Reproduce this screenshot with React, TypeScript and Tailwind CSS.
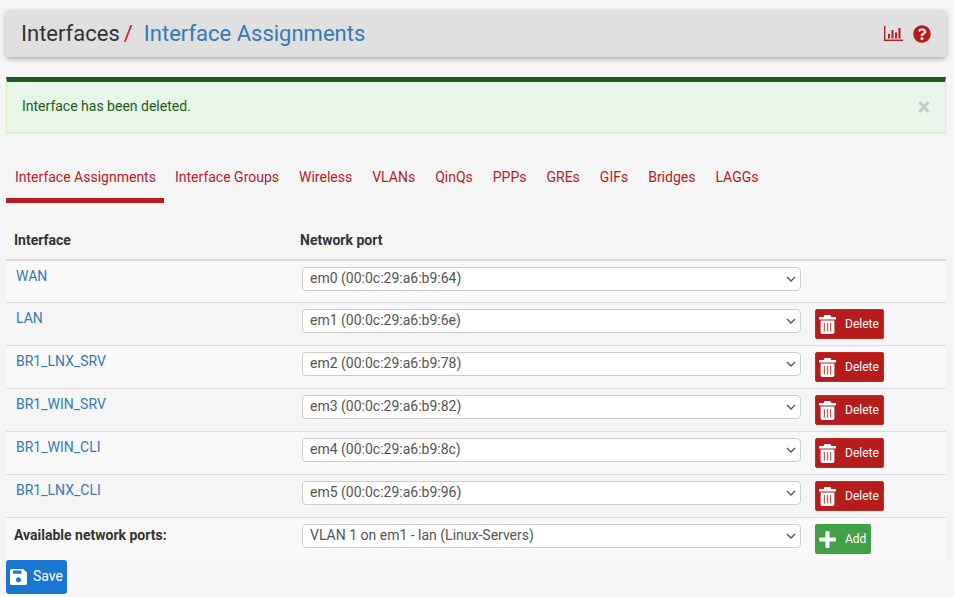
import { FaQuestionCircle } from "react-icons/fa";

const tabs = ["Interface Assignments", "Interface Groups", "Wireless", "VLANs", "QinQs", "PPPs", "GREs", "GIFs", "Bridges", "LAGGs"];
const rows = [
  ["WAN", "em0 (00:0c:29:a6:b9:64)"],
  ["LAN", "em1 (00:0c:29:a6:b9:6e)"],
  ["BR1_LNX_SRV", "em2 (00:0c:29:a6:b9:78)"],
  ["BR1_WIN_SRV", "em3 (00:0c:29:a6:b9:82)"],
  ["BR1_WIN_CLI", "em4 (00:0c:29:a6:b9:8c)"],
  ["BR1_LNX_CLI", "em5 (00:0c:29:a6:b9:96)"],
];

function ChartIcon() {
  return (
    <svg width="19" height="15" viewBox="0 0 19 15" fill="#b71c1c">
      <rect x="0" y="0" width="1.4" height="15" />
      <rect x="0" y="13.6" width="19" height="1.4" />
      <rect x="4" y="8" width="2" height="4.5" />
      <rect x="7.5" y="4" width="2" height="8.5" />
      <rect x="11" y="6.5" width="2" height="6" />
      <rect x="14.5" y="2" width="2" height="10.5" />
    </svg>
  );
}

function TrashIcon() {
  return (
    <svg width="17" height="19" viewBox="0 0 17 19" fill="#fff" className="shrink-0">
      <path d="M5.5 0h6l.8 2H17v2.4H0V2h4.700z" />
      <path d="M1.600 5.400h13.800v11.600c0 1.100-.8 2-1.800 2H3.400c-1 0-1.800-.9-1.800-2z" />
      <rect x="4.800" y="8" width="1.200" height="8.500" fill="#c9574f" />
      <rect x="7.900" y="8" width="1.200" height="8.500" fill="#c9574f" />
      <rect x="11" y="8" width="1.200" height="8.500" fill="#c9574f" />
    </svg>
  );
}

function PlusIcon() {
  return (
    <svg width="17" height="17" viewBox="0 0 17 17" fill="#fff" className="shrink-0">
      <path d="M6.500 1c0-.6.400-1 1-1h2c.6 0 1 .4 1 1v5.500H16c.6 0 1 .4 1 1v2c0 .6-.4 1-1 1h-5.500V16c0 .6-.4 1-1 1h-2c-.6 0-1-.4-1-1v-5.500H1c-.6 0-1-.4-1-1v-2c0-.6.400-1 1-1h5.500z" />
    </svg>
  );
}

function SaveIcon() {
  return (
    <svg width="17" height="16" viewBox="0 0 17 16" className="shrink-0">
      <path d="M1.500 0H13l4 3.600v10.900c0 .8-.7 1.500-1.500 1.500h-14C.7 16 0 15.300 0 14.500V1.500C0 .7.700 0 1.500 0z" fill="#fff" />
      <rect x="3" y="1.500" width="8.500" height="3.200" rx=".5" fill="#1976d2" />
      <circle cx="8.500" cy="10.800" r="2.500" fill="#1976d2" />
    </svg>
  );
}

function PortSelect({ value }: { value: string }) {
  return (
    <div className="relative w-[499px] h-[24px]">
      <select
        defaultValue={value}
        className="appearance-none block w-full h-full bg-white border border-[#cccccc] rounded-[4px] pl-[7px] pb-[1px] text-[14px] text-[#555555] font-['Roboto',sans-serif]"
      >
        <option>{value}</option>
      </select>
      <svg width="10" height="6" viewBox="0 0 10 6" className="absolute right-[5px] top-[9px] pointer-events-none">
        <path d="M1 1l4 4 4-4" fill="none" stroke="#555555" strokeWidth="1.400" />
      </svg>
    </div>
  );
}

export default function App() {
  return (
    <div className="min-h-[597px] bg-[#f5f5f5] pl-[6px] pr-[8px] pt-[10px] font-['Roboto',sans-serif] text-[14px] text-[#333333]">
      <div className="h-[47px] bg-[#e0e0e0] rounded-[4px] shadow-[0_2px_5px_rgba(0,0,0,0.3)] flex items-center justify-between pl-[15px] pr-[15px]">
        <div className="flex items-center text-[22px] leading-[26px]">
          <span>Interfaces</span>
          <span className="text-[#b71c1c] ml-[4px]">/</span>
          <span className="text-[#337ab7] ml-[11px]">Interface Assignments</span>
        </div>
        <div className="flex items-center gap-[10px]">
          <ChartIcon />
          <FaQuestionCircle className="text-[#b71c1c] w-[18px] h-[18px]" />
        </div>
      </div>

      <div className="mt-[20px] h-[56px] bg-[#e8f5e9] border border-[#dcedc8] border-t-[5px] border-t-[#1b5e20] flex items-center justify-between pl-[15px] pr-[15px] pb-[2px] text-[#1b5e20] shadow-[0_1px_1px_rgba(0,0,0,0.05)]">
        <span>Interface has been deleted.</span>
        <span className="text-[23px] font-bold leading-none text-[#c4c9c4] pt-[3px]">×</span>
      </div>

      <div className="mt-[23px] flex gap-[2px] h-[47px]">
        {tabs.map((t, i) => (
          <div
            key={t}
            className={
              i === 0
                ? "w-[158px] whitespace-nowrap h-[47px] pl-[9px] pt-[11px] leading-[20px] text-[#b71c1c] border-b-[5px] border-[#b71c1c]"
                : "h-[47px] px-[9px] pt-[11px] leading-[20px] text-[#b71c1c]"
            }
          >
            {t}
          </div>
        ))}
      </div>

      <div className="mt-[20px] flex items-center h-[38px] pb-[2px] border-b-2 border-[#dddddd] font-bold">
        <div className="w-[294px] pl-[8px]">Interface</div>
        <div>Network port</div>
      </div>

      {rows.map(([name, port], i) => (
        <div
          key={name}
          className={
            i === 0
              ? "flex h-[42px] border-b border-[#dddddd] bg-[#f9f9f9]"
              : i % 2 === 0
                ? "flex h-[43px] border-b border-[#dddddd] bg-[#f9f9f9]"
                : "flex h-[43px] border-b border-[#dddddd] bg-[#f5f5f5]"
          }
        >
          <div className="w-[296px] pl-[10px] pt-[5px] text-[#337ab7] leading-[20px]">{name}</div>
          <div className="pt-[6px]">
            <PortSelect value={port} />
          </div>
          {i > 0 && (
            <button className="ml-[14px] mt-[6px] w-[69px] h-[30px] bg-[#b71c1c] rounded-[2px] border border-[#c62828] flex items-center text-white text-[12px] pl-[3px]">
              <TrashIcon />
              <span className="ml-[9px]">Delete</span>
            </button>
          )}
        </div>
      ))}

      <div className="flex h-[42px] bg-[#f9f9f9]">
        <div className="w-[296px] pl-[8px] pt-[7px] font-bold leading-[20px]">Available network ports:</div>
        <div className="pt-[6px]">
          <PortSelect value="VLAN 1 on em1 - lan (Linux-Servers)" />
        </div>
        <button className="ml-[14px] mt-[6px] w-[56px] h-[30px] bg-[#43a047] rounded-[2px] flex items-center text-white text-[12px] pl-[4px]">
          <PlusIcon />
          <span className="ml-[9px]">Add</span>
        </button>
      </div>

      <button className="w-[61px] h-[34px] bg-[#1976d2] rounded-[3px] flex items-center text-white text-[14px] pl-[4px] pb-[1px]">
        <SaveIcon />
        <span className="ml-[6px]">Save</span>
      </button>
    </div>
  );
}
